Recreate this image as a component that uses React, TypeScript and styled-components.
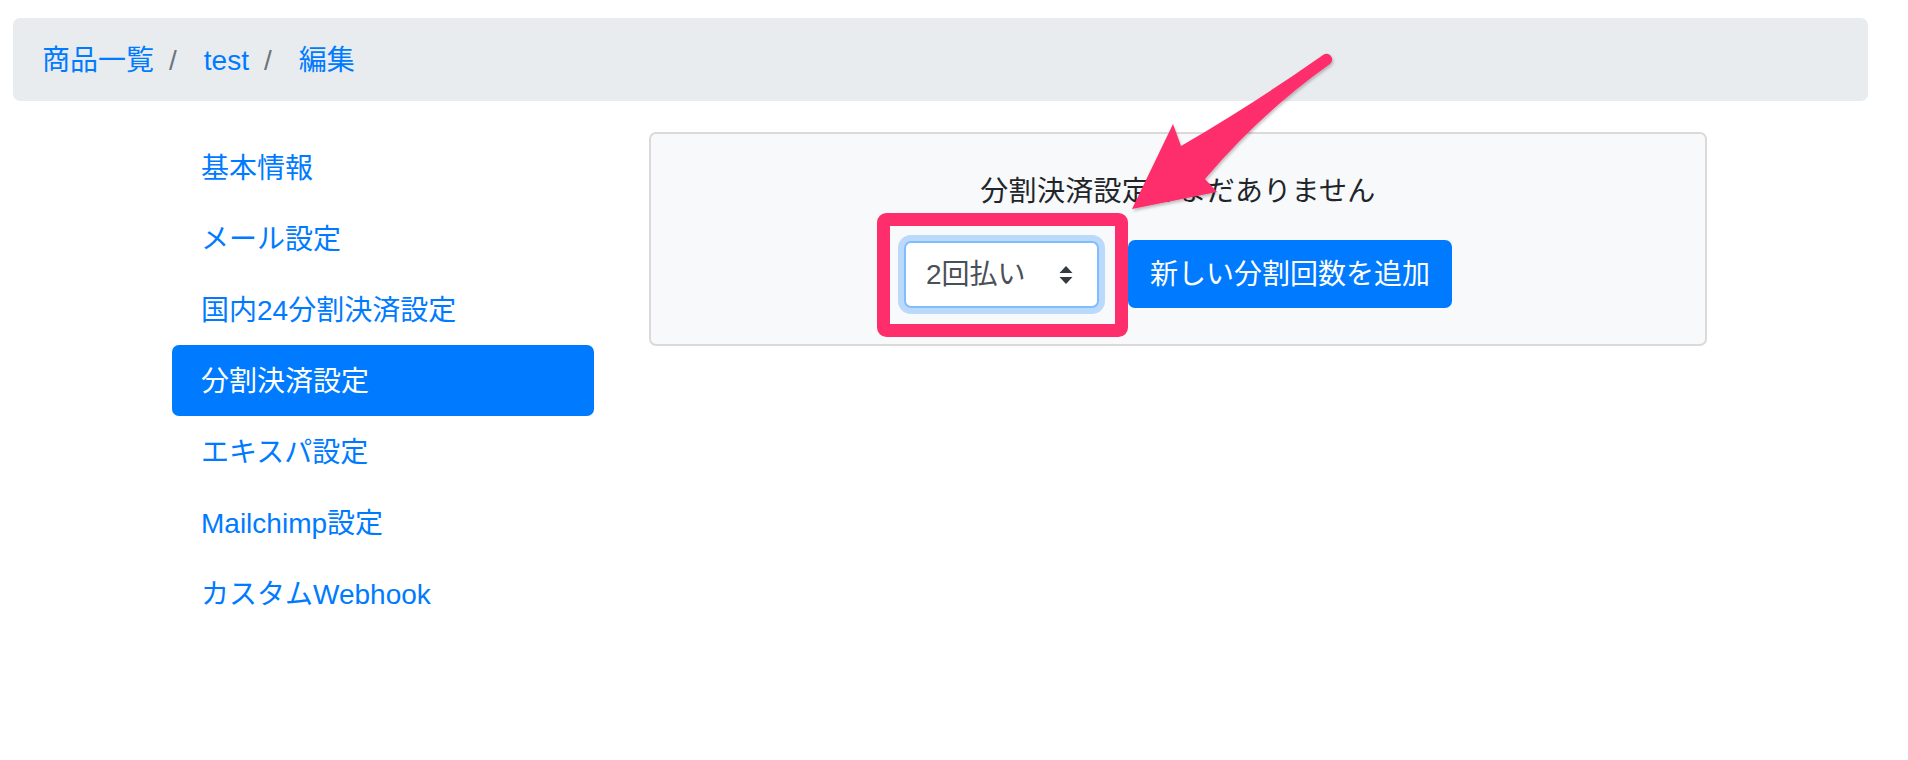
import React from "react";
import styled, { createGlobalStyle } from "styled-components";

const GlobalStyle = createGlobalStyle`
  html, body {
    margin: 0;
    padding: 0;
    background: #ffffff;
  }
  body {
    font-family: "Liberation Sans", "Noto Sans CJK JP", sans-serif;
    font-size: 28px;
    line-height: 42px;
    color: #212529;
  }
  * { box-sizing: border-box; }
`;

const Page = styled.div`
  position: relative;
  width: 1908px;
  min-height: 760px;
  padding: 18px 40px 0 13px;
`;

const Breadcrumb = styled.ol`
  display: flex;
  align-items: center;
  list-style: none;
  margin: 0;
  height: 83px;
  padding: 3px 29px 0;
  background: #e9ecef;
  border-radius: 7px;
`;

const Crumb = styled.li<{ $first?: boolean }>`
  display: flex;
  align-items: center;
  color: #007bff;
  white-space: nowrap;
  &::before {
    content: ${(p) => (p.$first ? "none" : '"/"')};
    color: #6c757d;
    padding: 0 27px 0 15px;
  }
`;

const Main = styled.div`
  display: flex;
  align-items: flex-start;
  gap: 55px;
  margin-top: 31px;
  padding-left: 159px;
`;

const SideNav = styled.nav`
  display: flex;
  flex-direction: column;
  width: 422px;
`;

const NavLink = styled.a<{ $active?: boolean }>`
  display: flex;
  align-items: center;
  height: 71px;
  padding: 2px 29px 0;
  border-radius: 7px;
  text-decoration: none;
  white-space: nowrap;
  color: ${(p) => (p.$active ? "#ffffff" : "#007bff")};
  background: ${(p) => (p.$active ? "#007bff" : "transparent")};
`;

const Panel = styled.section`
  width: 1058px;
  padding: 37px 0 36px;
  background: #f8f9fa;
  border: 2px solid #dadada;
  border-radius: 7px;
`;

const EmptyText = styled.p`
  margin: 0;
  text-align: center;
  color: #212529;
  letter-spacing: 0.3px;
`;

const FormRow = styled.div`
  display: flex;
  justify-content: center;
  align-items: center;
  gap: 29px;
  margin-top: 27px;
`;

const SelectBox = styled.div`
  display: flex;
  align-items: center;
  justify-content: space-between;
  width: 195px;
  height: 67px;
  padding: 2px 24px 0 20px;
  background: #ffffff;
  border: 2px solid #80bdff;
  border-radius: 7px;
  box-shadow: 0 0 0 6px rgba(0, 123, 255, 0.25);
  color: #495057;
  white-space: nowrap;
`;

const AddButton = styled.button`
  height: 68px;
  padding: 2px 22px 0;
  border: none;
  border-radius: 7px;
  background: #007bff;
  color: #ffffff;
  font: inherit;
  white-space: nowrap;
`;

const Annotation = styled.svg`
  position: absolute;
  left: 0;
  top: 0;
  width: 1908px;
  height: 760px;
  pointer-events: none;
  overflow: visible;
`;

const navItems = [
  "基本情報",
  "メール設定",
  "国内24分割決済設定",
  "分割決済設定",
  "エキスパ設定",
  "Mailchimp設定",
  "カスタムWebhook",
];

export default function App() {
  return (
    <>
      <GlobalStyle />
      <Page>
        <Breadcrumb>
          <Crumb $first>商品一覧</Crumb>
          <Crumb>test</Crumb>
          <Crumb>編集</Crumb>
        </Breadcrumb>
        <Main>
          <SideNav>
            {navItems.map((item) => (
              <NavLink key={item} href="#" $active={item === "分割決済設定"}>
                {item}
              </NavLink>
            ))}
          </SideNav>
          <Panel>
            <EmptyText>分割決済設定はまだありません</EmptyText>
            <FormRow>
              <SelectBox>
                <span>2回払い</span>
                <svg width="14" height="20" viewBox="0 0 14 20">
                  <path d="M7 1 L13.5 8 H0.5 Z" fill="#343a40" />
                  <path d="M7 19 L13.5 12 H0.5 Z" fill="#343a40" />
                </svg>
              </SelectBox>
              <AddButton>新しい分割回数を追加</AddButton>
            </FormRow>
          </Panel>
        </Main>
        <Annotation viewBox="0 0 1908 760">
          <defs>
            <filter id="arrowShadow" x="-20%" y="-20%" width="140%" height="140%">
              <feDropShadow dx="1" dy="2" stdDeviation="1.5" floodColor="#000" floodOpacity="0.25" />
            </filter>
          </defs>
          <rect
            x="883.5"
            y="219.5"
            width="238"
            height="111"
            rx="3"
            fill="none"
            stroke="#fe2e6c"
            strokeWidth="13"
          />
          <path
            filter="url(#arrowShadow)"
            fill="#fe2e6c"
            d="M1132 209 L1173 124 L1181 146 Q1255 103 1323 55 A5 5 0 0 1 1330 64 Q1262 112 1205 179 L1217 192 Z"
          />
        </Annotation>
      </Page>
    </>
  );
}
